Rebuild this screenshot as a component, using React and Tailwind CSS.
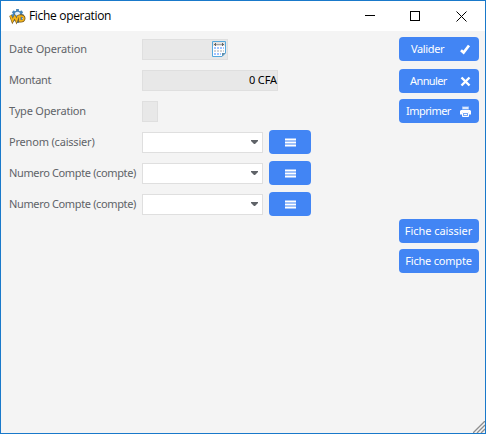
import React from "react";

function AppLogo() {
  return (
    <svg width="17" height="17" viewBox="0 0 17 17" className="shrink-0">
      <g stroke="#4584b8" strokeWidth="2.8">
        <path d="M8.5 1v14M2 8h13M3.8 3.3l9.4 9.4M13.2 3.3l-9.4 9.4" />
      </g>
      <circle cx="8.5" cy="8" r="5.4" fill="#4584b8" />
      <ellipse cx="8.5" cy="5.8" rx="2.6" ry="2" fill="#e4eff8" />
      <path d="M1.5 7.5l2 5.5 2.2-4 1.8 4 2-5.5" fill="none" stroke="#7b5a1c" strokeWidth="2.6" />
      <path d="M10.5 7.8v5.4c3.4.5 4.7-.8 4.7-2.9s-1.5-3-4.7-2.5z" fill="none" stroke="#7b5a1c" strokeWidth="2.6" />
      <path d="M1.5 7.5l2 5.2 2.2-4 1.8 4 2-5.2" fill="none" stroke="#f3b51d" strokeWidth="1.7" />
      <path d="M10.8 8v4.8c3 .4 4-.7 4-2.4s-1.3-2.7-4-2.4z" fill="none" stroke="#f3b51d" strokeWidth="1.6" />
    </svg>
  );
}

function CalendarIcon() {
  return (
    <svg width="14" height="16" viewBox="0 0 14 16" className="shrink-0">
      <path d="M.5.5h13v11.5l-3.5 3.5H.5z" fill="#fff" stroke="#55a8dc" />
      <path d="M1 1h12v4H1z" fill="#e3e3e3" />
      <path d="M2 3h10v1H2z" fill="#a5a5a5" />
      <path d="M3 2h1v3H3zM10 2h1v3h-1zM2 3h2v1H2zM10 3h2v1h-2z" fill="#666" />
      <path d="M2 6h2v2H2zM5 6h2v2H5zM8 6h2v2H8zM11 6h1v2h-1zM2 12h2v2H2zM5 12h2v2H5zM8 12h1v2H8z" fill="#a0c3ff" />
      <path d="M2 9h2v2H2zM5 9h2v2H5zM8 9h2v2H8zM11 9h1v2h-1z" fill="#d3d3d3" />
      <path d="M10 15.5V12h3.5z" fill="#5d8eae" />
    </svg>
  );
}

function ActionButton({ label, spacing, children }) {
  return (
    <button className="flex h-6 w-20 items-center rounded bg-[#4285f4] pr-2 text-white">
      <span className={"flex-1 whitespace-nowrap text-left leading-6 " + spacing}>{label}</span>
      {children}
    </button>
  );
}

function Row({ label, spacing, children }) {
  return (
    <div className="flex h-6 items-start">
      <label className={"w-[133px] shrink-0 whitespace-nowrap leading-6 text-[#5f6368] " + spacing}>{label}</label>
      {children}
    </div>
  );
}

function ComboRow({ label, spacing }) {
  return (
    <Row label={label} spacing={spacing}>
      <div className="mt-0.5 flex h-[21px] w-[121px] justify-end border border-[#dfdfdf] bg-white pr-1 pt-[7px]">
        <svg width="7" height="4" viewBox="0 0 7 4">
          <path d="M0 0h7v1L4 4H3L0 1z" fill="#5f6368" />
        </svg>
      </div>
      <button className="ml-1.5 flex h-6 w-[42px] items-center justify-center rounded bg-[#4285f4]">
        <svg width="11" height="9" viewBox="0 0 11 9" shapeRendering="crispEdges" className="mt-px">
          <path d="M0 0h11v9H0z" fill="#a0c2fa" />
          <path d="M0 1h11v1H0zM0 4h11v1H0zM0 7h11v1H0z" fill="#fff" />
        </svg>
      </button>
    </Row>
  );
}

export default function App() {
  return (
    <div className="flex h-[434px] w-[486px] flex-col overflow-hidden border border-[#1979ca] bg-[#f4f4f4] font-['Trebuchet_MS','Noto_Sans',sans-serif] text-[11px]">
      <header className="flex h-[30px] shrink-0 items-center bg-white pl-2">
        <AppLogo />
        <h1 className="ml-[3px] flex-1 whitespace-nowrap font-['Open_Sans',sans-serif] text-xs tracking-[-0.32px] text-black">Fiche operation</h1>
        <div className="flex items-center pr-[18px]">
          <svg width="10" height="10" className="mr-[35px]" shapeRendering="crispEdges"><path d="M0 4h10v1H0z" /></svg>
          <svg width="10" height="10" className="mr-9" shapeRendering="crispEdges"><path d="M.5.5h9v9h-9z" fill="none" stroke="#000" /></svg>
          <svg width="11" height="11"><path d="M.5.5l10 10M10.5.5l-10 10" stroke="#000" strokeWidth="1" /></svg>
        </div>
      </header>

      <main className="flex flex-1 justify-between pl-2 pr-1.5 pt-1.5">
        <div className="flex flex-col gap-[7px]">
          <Row label="Date Operation" spacing="tracking-[-0.12px]">
            <div className="mt-0.5 flex h-[21px] w-[86px] justify-end border border-[#dfdfdf] bg-[#e8e8e8] pr-px pt-px">
              <CalendarIcon />
            </div>
          </Row>
          <Row label="Montant" spacing="tracking-[-0.3px]">
            <div className="mt-0.5 h-[21px] w-[136px] border border-[#dfdfdf] bg-[#e8e8e8] text-right leading-[18px] tracking-[-0.1px] text-black">0 CFA</div>
          </Row>
          <Row label="Type Operation" spacing="tracking-[-0.2px]">
            <div className="mt-0.5 h-[21px] w-4 border border-[#dfdfdf] bg-[#e8e8e8]" />
          </Row>
          <ComboRow label="Prenom (caissier)" spacing="tracking-[-0.19px]" />
          <ComboRow label="Numero Compte (compte)" spacing="tracking-[-0.36px]" />
          <ComboRow label="Numero Compte (compte)" spacing="tracking-[-0.36px]" />
        </div>

        <div className="flex flex-col">
          <ActionButton label="Valider" spacing="pl-3 tracking-[-0.35px]">
            <svg width="12" height="11" viewBox="0 0 12 11"><path d="M2 6.2l2.6 2.3 5.4-7" fill="none" stroke="#fff" strokeWidth="2.7" /></svg>
          </ActionButton>
          <div className="h-2" />
          <ActionButton label="Annuler" spacing="pl-[11px] tracking-[-0.6px]">
            <svg width="11" height="11" viewBox="0 0 11 11"><path d="M1.5 1.5l8 8M9.5 1.5l-8 8" fill="none" stroke="#fff" strokeWidth="2.4" /></svg>
          </ActionButton>
          <div className="h-1.5" />
          <ActionButton label="Imprimer" spacing="pl-[7px] tracking-[-0.55px]">
            <svg width="11" height="11" viewBox="0 0 11 11">
              <path d="M2 .5h7v3H2z" fill="#a8c8fb" />
              <path d="M3 1h5v2H3z" fill="#dce8fd" />
              <path d="M1 4h9l1 1v3.5H9V6.5H2v2H0V5z" fill="#fff" />
              <path d="M2.5 6.5h6v4h-6z" fill="#78a9f7" stroke="#fff" />
              <path d="M4 8.5h3" stroke="#fff" />
            </svg>
          </ActionButton>
          <div className="mt-24 flex flex-col gap-1.5">
            <button className="h-6 w-20 whitespace-nowrap rounded bg-[#4285f4] pr-px text-center leading-6 tracking-[-0.05px] text-white">Fiche caissier</button>
            <button className="h-6 w-20 whitespace-nowrap rounded bg-[#4285f4] pr-px text-center leading-6 tracking-[-0.2px] text-white">Fiche compte</button>
          </div>
        </div>
      </main>

      <footer className="flex shrink-0 justify-end">
        <svg width="12" height="12" viewBox="0 0 12 12">
          <path d="M0 12L12 0M4 12l8-8M8 12l4-4" stroke="#8e8e8e" strokeWidth="1.3" />
        </svg>
      </footer>
    </div>
  );
}
